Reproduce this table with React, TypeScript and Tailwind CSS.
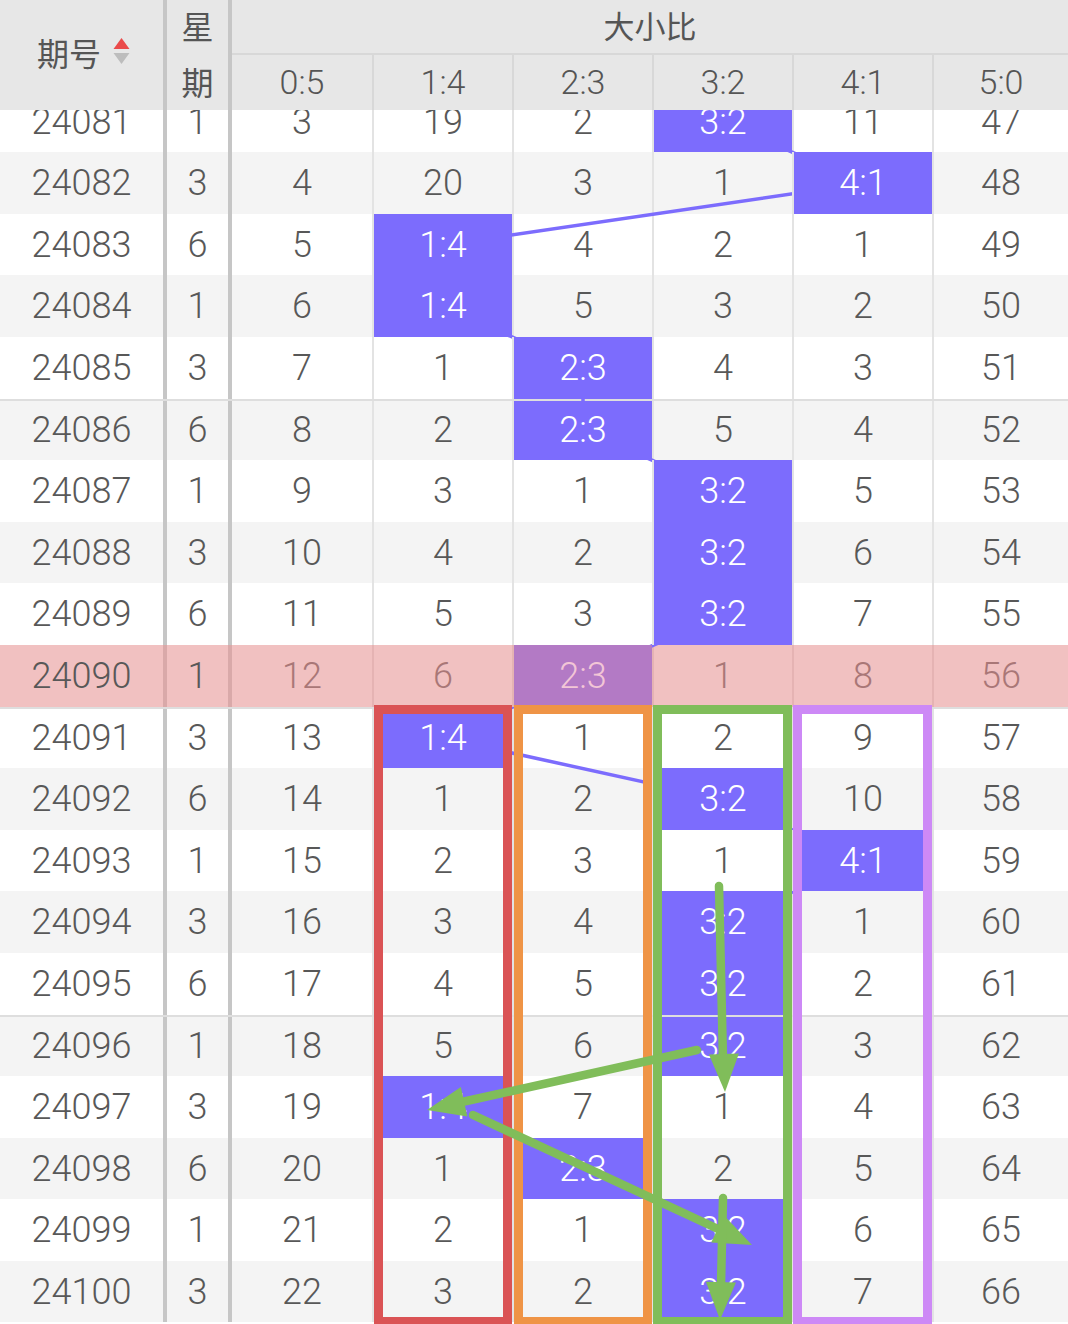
import React from 'react';

// 大小比 trend table with hand-drawn annotations
const labels = ['0:5', '1:4', '2:3', '3:2', '4:1', '5:0'];

type RowData = [string, string, number, number[]];

const rows: RowData[] = [
    ['24081', '1', 3, [3, 19, 2, 0, 11, 47]],
    ['24082', '3', 4, [4, 20, 3, 1, 0, 48]],
    ['24083', '6', 1, [5, 0, 4, 2, 1, 49]],
    ['24084', '1', 1, [6, 0, 5, 3, 2, 50]],
    ['24085', '3', 2, [7, 1, 0, 4, 3, 51]],
    ['24086', '6', 2, [8, 2, 0, 5, 4, 52]],
    ['24087', '1', 3, [9, 3, 1, 0, 5, 53]],
    ['24088', '3', 3, [10, 4, 2, 0, 6, 54]],
    ['24089', '6', 3, [11, 5, 3, 0, 7, 55]],
    ['24090', '1', 2, [12, 6, 0, 1, 8, 56]],
    ['24091', '3', 1, [13, 0, 1, 2, 9, 57]],
    ['24092', '6', 3, [14, 1, 2, 0, 10, 58]],
    ['24093', '1', 4, [15, 2, 3, 1, 0, 59]],
    ['24094', '3', 3, [16, 3, 4, 0, 1, 60]],
    ['24095', '6', 3, [17, 4, 5, 0, 2, 61]],
    ['24096', '1', 3, [18, 5, 6, 0, 3, 62]],
    ['24097', '3', 1, [19, 0, 7, 1, 4, 63]],
    ['24098', '6', 2, [20, 1, 0, 2, 5, 64]],
    ['24099', '1', 3, [21, 2, 1, 0, 6, 65]],
    ['24100', '3', 3, [22, 3, 2, 0, 7, 66]]
];

const ROW_H = 61.6;
const PINK = 9;
const CJK = { fontFamily: "'Noto Sans CJK SC', sans-serif" };

const SortIcon = () => (
    <svg width="17" height="28" viewBox="0 0 17 28">
        <polygon points="8.5,0 16.5,11 0.5,11" fill="#ea4a4a" />
        <polygon points="0.5,15 16.5,15 8.5,26" fill="#bdbdbd" />
    </svg>
);

const Arrow = ({ x1, y1, x2, y2, bx, by }: { x1: number; y1: number; x2: number; y2: number; bx: number; by: number }) => {
    // bx,by = tip of the head
    const dx = bx - x1;
    const dy = by - y1;
    const len = Math.sqrt(dx * dx + dy * dy);
    const ux = dx / len;
    const uy = dy / len;
    const hl = 38;
    const hw = 15;
    const cx = bx - ux * hl;
    const cy = by - uy * hl;
    const pts = `${bx},${by} ${cx - uy * hw},${cy + ux * hw} ${cx + uy * hw},${cy - ux * hw}`;
    return (
        <g>
            <line x1={x1} y1={y1} x2={x2} y2={y2} stroke="#80bd5a" strokeWidth="8.5" strokeLinecap="round" />
            <polygon points={pts} fill="#80bd5a" />
        </g>
    );
};

export default function App() {
    const linePts = rows.map((r, i) => `${302 + 140 * r[2] + (r[2] > 0 ? 1 : 0)},${30.8 + ROW_H * i}`).join(' ');

    return (
        <div
            className="relative w-[1068px] h-[1324px] overflow-hidden bg-white"
            style={{ fontFamily: "Roboto, 'Noto Sans CJK SC', sans-serif" }}
        >
            {/* Header */}
            <div className="flex h-[110px] bg-[#e7e7e7] text-[#555555]">
                <div className="w-[167px] border-r-4 border-[#c6c6c6] flex items-center justify-center gap-3 pb-[6px] pl-[4px]">
                    <span className="text-[32px] leading-none" style={CJK}>期号</span>
                    <SortIcon />
                </div>
                <div className="w-[65px] border-r-4 border-[#c6c6c6] flex flex-col text-[32px] leading-none" style={CJK}>
                    <div className="h-[55px] flex items-center justify-center pb-[6px]">星</div>
                    <div className="flex-1 flex items-center justify-center pb-[4px]">期</div>
                </div>
                <div className="flex-1 flex flex-col">
                    <div
                        className="h-[55px] border-b-2 border-[#d8d8d8] flex items-center justify-center text-[31px] leading-none pb-[4px]"
                        style={CJK}
                    >
                        大小比
                    </div>
                    <div className="flex flex-1">
                        {labels.map((l, i) => (
                            <div
                                key={l}
                                className={`flex items-center justify-center text-[34px] font-light ${i === 0 ? 'w-[140px]' : i < 5 ? 'w-[140px] border-l-2 border-[#d8d8d8]' : 'flex-1 border-l-2 border-[#d8d8d8]'}`}
                            >
                                {l}
                            </div>
                        ))}
                    </div>
                </div>
            </div>

            {/* Body */}
            <div className="h-[1214px] overflow-hidden">
                <div className="relative mt-[-19.4px]">
                    {rows.map((r, i) => {
                        const pink = i === PINK;
                        const bg = pink ? 'bg-[#f1c1c1]' : i % 2 === 1 ? 'bg-[#f4f4f4]' : 'bg-white';
                        const sep = pink ? 'border-[#d9a9a9]' : 'border-[#c6c6c6]';
                        const top = i % 5 === 0 ? 'border-t-2 border-t-[#dedede]' : '';
                        return (
                            <div key={r[0]} className={`flex h-[61.6px] text-[36px] font-light text-[#585858] ${bg} ${top}`}>
                                <div className={`w-[167px] border-r-4 ${sep} flex items-center justify-center`}>{r[0]}</div>
                                <div className={`w-[65px] border-r-4 ${sep} flex items-center justify-center`}>{r[1]}</div>
                                {r[3].map((v, j) => {
                                    const hi = j === r[2];
                                    const line = pink ? 'border-[#e5b3b3]' : 'border-[#e3e3e3]';
                                    const w = j === 0 ? 'w-[140px]' : j < 5 ? `w-[140px] border-l-2 ${line}` : `flex-1 border-l-2 ${line}`;
                                    if (hi) {
                                        return (
                                            <div
                                                key={j}
                                                className={`${w} relative z-[2] flex items-center justify-center ${pink ? 'bg-[#b37ac5] text-[#f2c6d6]' : 'bg-[#7c6cfd] text-white'}`}
                                            >
                                                {labels[j]}
                                            </div>
                                        );
                                    }
                                    return (
                                        <div key={j} className={`${w} flex items-center justify-center ${pink ? 'text-[#a97777]' : ''}`}>
                                            {v}
                                        </div>
                                    );
                                })}
                            </div>
                        );
                    })}
                    <svg className="absolute left-0 top-0 z-[1] pointer-events-none" width="1068" height="1232">
                        <polyline points={linePts} fill="none" stroke="#7c6cfd" strokeWidth="3.5" />
                    </svg>
                </div>
            </div>

            {/* Annotation boxes */}
            <div className="absolute left-[374px] top-[705px] w-[138px] h-[621px] border-[9px] border-[#da5355] z-[5]" />
            <div className="absolute left-[514px] top-[705px] w-[138px] h-[621px] border-[9px] border-[#ef9446] z-[5]" />
            <div className="absolute left-[653px] top-[705px] w-[139px] h-[621px] border-[9px] border-[#80bd5a] z-[5]" />
            <div className="absolute left-[793px] top-[705px] w-[139px] h-[621px] border-[9px] border-[#cd89f6] z-[5]" />

            {/* Green arrows */}
            <svg className="absolute left-0 top-0 z-[6] pointer-events-none" width="1068" height="1324">
                <Arrow x1={719} y1={886} x2={723} y2={1060} bx={725} by={1092} />
                <Arrow x1={697} y1={1050} x2={462} y2={1102} bx={427} by={1110} />
                <Arrow x1={473} y1={1115} x2={718} y2={1229} bx={752} by={1245} />
                <Arrow x1={723} y1={1198} x2={721} y2={1285} bx={720} by={1320} />
            </svg>
        </div>
    );
}
